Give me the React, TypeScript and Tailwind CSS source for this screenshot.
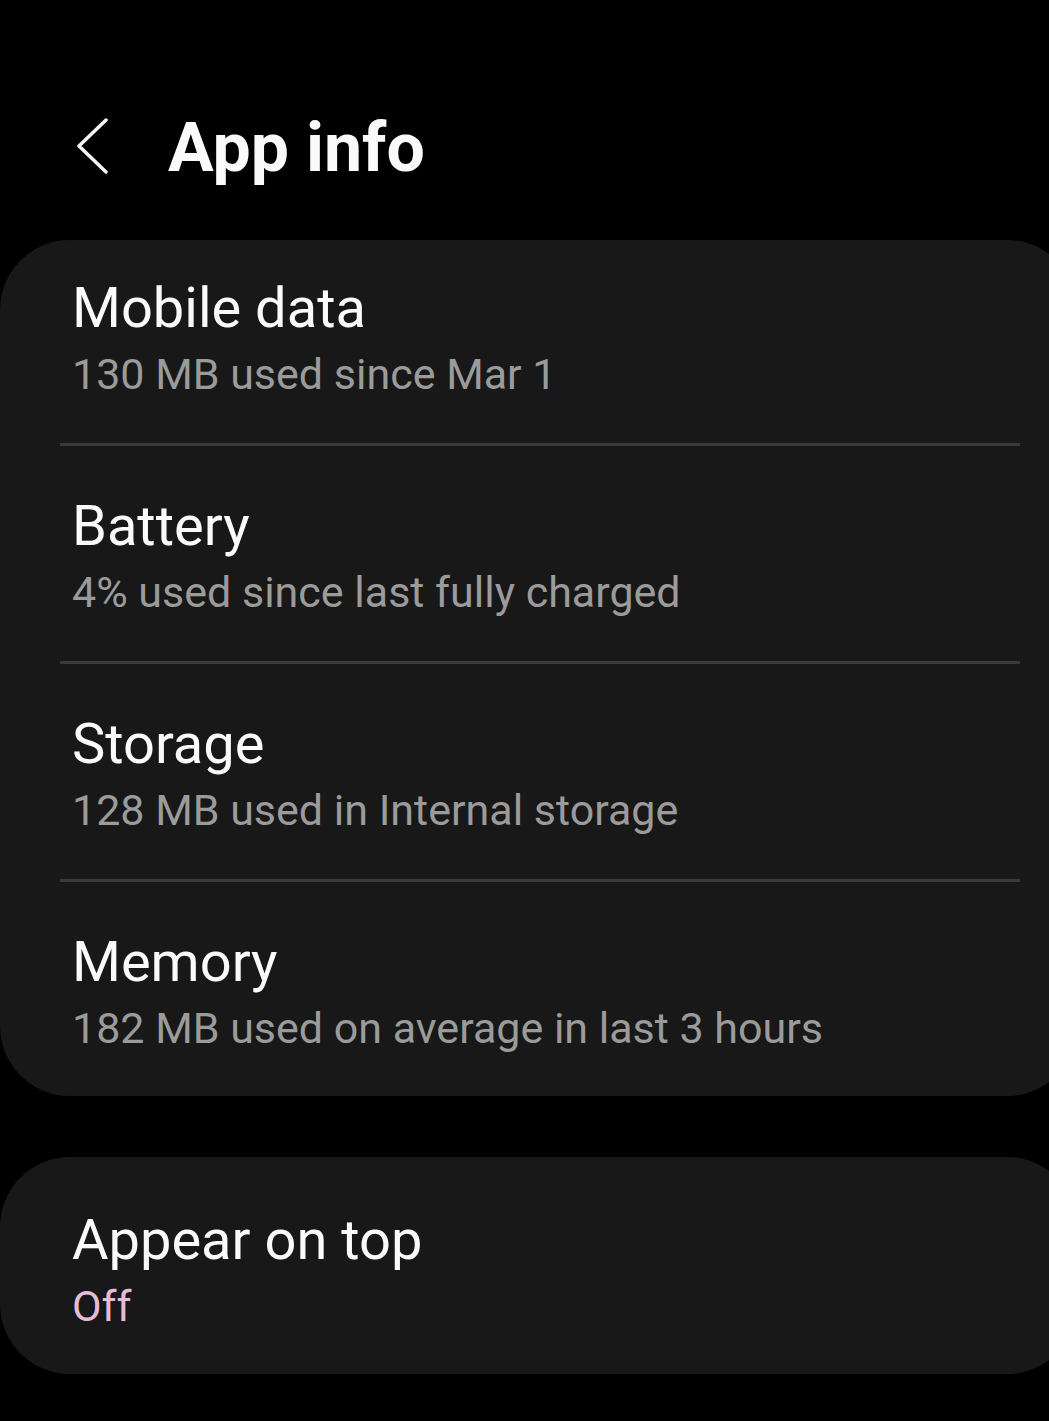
import React from "react";

type Item = { title: string; sub: string; accent?: boolean };

const USAGE: Item[] = [
  { title: "Mobile data", sub: "130 MB used since Mar 1" },
  { title: "Battery", sub: "4% used since last fully charged" },
  { title: "Storage", sub: "128 MB used in Internal storage" },
  { title: "Memory", sub: "182 MB used on average in last 3 hours" },
];

function Row({ item, first, last }: { item: Item; first?: boolean; last?: boolean }) {
  return (
    <div className={`pl-[72px] ${first ? "pt-[36px]" : "pt-[48px]"} ${last ? "pb-[36px]" : "pb-[37px]"}`}>
      <div className="text-[56px] leading-[64px] text-[#fafafa]">{item.title}</div>
      <div
        className={`mt-[2px] text-[43px] leading-[64px] ${item.accent ? "text-[#e5bcd7]" : "text-[#9b9b9b]"}`}
      >
        {item.sub}
      </div>
    </div>
  );
}

function Divider() {
  return <div className="ml-[60px] h-[3px] w-[960px] bg-[#3a3a3a]" />;
}

export default function App() {
  return (
    <div
      className="min-h-[1421px] w-full overflow-hidden bg-black"
      style={{ fontFamily: "Roboto, 'Noto Sans', sans-serif" }}
    >
      {/* Header */}
      <div className="flex items-center pt-[108px]">
        <svg
          width="36"
          height="60"
          viewBox="0 0 36 60"
          className="ml-[74px] shrink-0"
          fill="none"
          stroke="#f5f5f5"
          strokeWidth="3.5"
          strokeLinecap="round"
          strokeLinejoin="round"
        >
          <polyline points="32,2 5,28 32,54" />
        </svg>
        <h1 className="ml-[58px] text-[68px] font-bold leading-[80px] text-[#fafafa]">App info</h1>
      </div>

      {/* Usage card */}
      <div className="mt-[52px] w-[1077px] rounded-[70px] bg-[#181818]">
        {USAGE.map((item, i) => (
          <React.Fragment key={item.title}>
            {i > 0 && <Divider />}
            <Row item={item} first={i === 0} last={i === USAGE.length - 1} />
          </React.Fragment>
        ))}
      </div>

      {/* Permission card */}
      <div className="mt-[61px] w-[1077px] rounded-[70px] bg-[#181818] pt-[51px] pb-[36px] pl-[72px]">
        <div className="text-[56px] leading-[64px] text-[#fafafa]">Appear on top</div>
        <div className="mt-[2px] text-[43px] leading-[64px] text-[#e5bcd7]">Off</div>
      </div>
    </div>
  );
}
